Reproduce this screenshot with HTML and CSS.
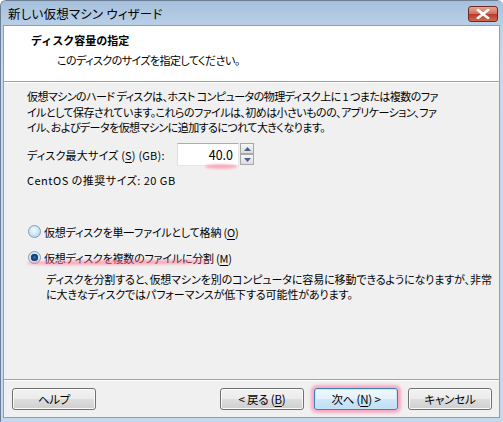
FILE: index.html
```html
<!DOCTYPE html>
<html lang="ja">
<head>
<meta charset="utf-8">
<title>新しい仮想マシン ウィザード</title>
<link rel="stylesheet" href="styles.css">
</head>
<body>
<div class="window">
  <div class="titlebar">
    <span class="title">新しい仮想マシン ウィザード</span>
    <span class="close"><svg width="14" height="10" viewBox="0 0 14 10"><path d="M2 1 L12 9 M12 1 L2 9" stroke="#fff" stroke-width="2.6" stroke-linecap="square"/></svg></span>
  </div>
  <div class="client">
    <div class="header">
      <div class="heading">ディスク容量の指定</div>
      <div class="subheading">このディスクのサイズを指定してください。</div>
    </div>
    <div class="sep"></div>
    <div class="body">
      <p class="para">仮想マシンのハード ディスクは、ホスト コンピュータの物理ディスク上に 1 つまたは複数のファ<br>イルとして保存されています。これらのファイルは、初めは小さいものの、アプリケーション、ファ<br>イル、およびデータを仮想マシンに追加するにつれて大きくなります。</p>
      <div class="size-row">
        <span class="size-label">ディスク最大サイズ (<u>S</u>) (GB):</span>
        <span class="spin">
          <span class="spin-input">40.0</span>
          <span class="spin-buttons">
            <span class="spin-btn"><svg width="7" height="4" viewBox="0 0 7 4"><path d="M0 4 L3.5 0 L7 4 Z" fill="#4d6185"/></svg></span>
            <span class="spin-btn"><svg width="7" height="4" viewBox="0 0 7 4"><path d="M0 0 L3.5 4 L7 0 Z" fill="#4d6185"/></svg></span>
          </span>
          <span class="mark mark-value"></span>
        </span>
      </div>
      <div class="recommend">CentOS の推奨サイズ: 20 GB</div>
      <div class="radio-row first"><span class="radio"></span><span>仮想ディスクを単一ファイルとして格納 (<u>O</u>)</span></div>
      <div class="radio-row second"><span class="radio checked"></span><span>仮想ディスクを複数のファイルに分割 (<u>M</u>)</span><span class="mark mark-radio"></span></div>
      <p class="desc">ディスクを分割すると、仮想マシンを別のコンピュータに容易に移動できるようになりますが、非常<br>に大きなディスクではパフォーマンスが低下する可能性があります。</p>
    </div>
    <div class="sep"></div>
    <div class="footer">
      <button class="btn">ヘルプ</button>
      <button class="btn back">&lt; 戻る (<u>B</u>)</button>
      <button class="btn default">次へ (<u>N</u>) &gt;</button>
      <button class="btn">キャンセル</button>
    </div>
  </div>
</div>
</body>
</html>
```

FILE: styles.css
```css
* { box-sizing: border-box; }
html, body { margin: 0; padding: 0; background: #ffffff; }
body {
  font-family: "Noto Sans CJK JP", "Noto Sans", sans-serif;
  font-size: 11px;
  letter-spacing: -0.2px;
  color: #000;
  font-feature-settings: "palt";
}
.window {
  width: 503px;
  height: 422px;
  display: flex;
  flex-direction: column;
  background: linear-gradient(#b4cbe4, #c6d9ee 60px, #c4d8ee);
  border-radius: 6px 6px 0 0;
  border-top: 1px solid #6d7f94;
  border-left: 1px solid #6d7f94;
  overflow: hidden;
}
.titlebar {
  height: 24px;
  display: flex;
  align-items: center;
  justify-content: space-between;
  padding: 0 5px 0 7px;
  background: linear-gradient(#a6c0dc, #b9cfe6);
}
.title { font-size: 12.5px; letter-spacing: 0.2px; }
.close {
  width: 30px;
  height: 16px;
  margin-top: 1px;
  border: 1px solid #6b2a24;
  border-radius: 3px;
  background: linear-gradient(#e6a595, #d1705c 48%, #b9392a 52%, #cf6b4e);
  display: flex;
  align-items: center;
  justify-content: center;
}
.client {
  flex: 1;
  display: flex;
  flex-direction: column;
  margin: 0 3px 4px 2px;
  border: 1px solid #8d9fb4;
  background: #f0f0f0;
}
.header {
  height: 55px;
  background: #ffffff;
  padding: 6px 0 0 27px;
}
.heading {
  font-weight: bold;
  font-size: 11px;
  line-height: 16px;
  letter-spacing: 0;
  font-feature-settings: normal;
}
.subheading { line-height: 16px; margin-top: 4px; padding-left: 26px; letter-spacing: -0.55px; }
.sep {
  height: 2px;
  border-top: 1px solid #a0a0a0;
  border-bottom: 1px solid #ffffff;
}
.body {
  flex: 1;
  padding: 6px 0 0 23px;
}
.para {
  margin: 0;
  line-height: 15.5px;
  white-space: nowrap;
  letter-spacing: -0.55px;
}
.size-row {
  display: flex;
  align-items: center;
  margin-top: 7px;
  height: 24px;
}
.size-label { width: 150px; letter-spacing: 0.2px; }
.spin { display: flex; position: relative; }
.spin-input {
  width: 62px;
  height: 23px;
  border: 1px solid #abadb3;
  border-left-color: #dbdfe6;
  border-right-color: #e3e9ef;
  border-bottom-color: #e3e9ef;
  background: #fff;
  text-align: right;
  padding-right: 5px;
  line-height: 21px;
  font-size: 12.5px;
  letter-spacing: 0;
}
.spin-buttons {
  display: flex;
  flex-direction: column;
  margin-left: 1px;
}
.spin-btn {
  width: 14px;
  height: 11px;
  border: 1px solid #a7a7a7;
  background: linear-gradient(#f6f6f6, #dcdcdc);
  display: flex;
  align-items: center;
  justify-content: center;
}
.mark {
  position: absolute;
  background: rgba(255, 120, 150, 0.55);
  filter: blur(1.2px);
  border-radius: 50%;
}
.mark-value { left: 28px; top: 21px; width: 32px; height: 5px; }
.recommend { margin-top: 5px; line-height: 16px; letter-spacing: 0.5px; }
.radio-row {
  display: flex;
  align-items: center;
  gap: 3px;
  line-height: 16px;
  position: relative;
}
.radio-row.first { margin-top: 36px; }
.radio-row.second { margin-top: 10px; }
.radio {
  width: 13px;
  height: 13px;
  border-radius: 50%;
  border: 1px solid #8a9aaa;
  background: radial-gradient(circle at 45% 40%, #f4fbff 0, #cfe8f8 45%, #9fcbea 100%);
  margin-left: 1px;
}
.radio.checked {
  background: radial-gradient(circle at 50% 50%, #3b7bc0 0, #103a6a 2.5px, #1b4f86 3.5px, #cfe3f2 4px, #e8f2fa 100%);
}
.mark-radio { left: 0; top: 10px; width: 183px; height: 5px; border-radius: 40%; transform: rotate(-0.4deg); }
.desc {
  margin: 6px 0 0 19px;
  line-height: 15px;
  white-space: nowrap;
  letter-spacing: -0.1px;
}
.footer {
  height: 36px;
  display: flex;
  align-items: flex-start;
  padding: 7px 7px 0 8px;
  gap: 10px;
}
.btn {
  width: 84px;
  height: 22px;
  font-family: inherit;
  font-size: 11.5px;
  letter-spacing: -0.2px;
  font-feature-settings: "palt";
  color: #000;
  padding: 0;
  border: 1px solid #707070;
  border-radius: 3px;
  background: linear-gradient(#f2f2f2, #ebebeb 50%, #dddddd 51%, #cfcfcf);
  box-shadow: inset 0 0 0 1px #fbfbfb;
}
.btn.back { margin-left: auto; }
.btn.default {
  border-color: #3c7fb1;
  background: linear-gradient(#f0f8fd, #e2f1fb 50%, #cde8f8 51%, #bfdff3);
  box-shadow: inset 0 0 0 1px #c8e6f7, 0 0 3px 3px rgba(255, 130, 170, 0.65);
}
u { text-decoration-thickness: 1px; text-underline-offset: 2px; }
```
